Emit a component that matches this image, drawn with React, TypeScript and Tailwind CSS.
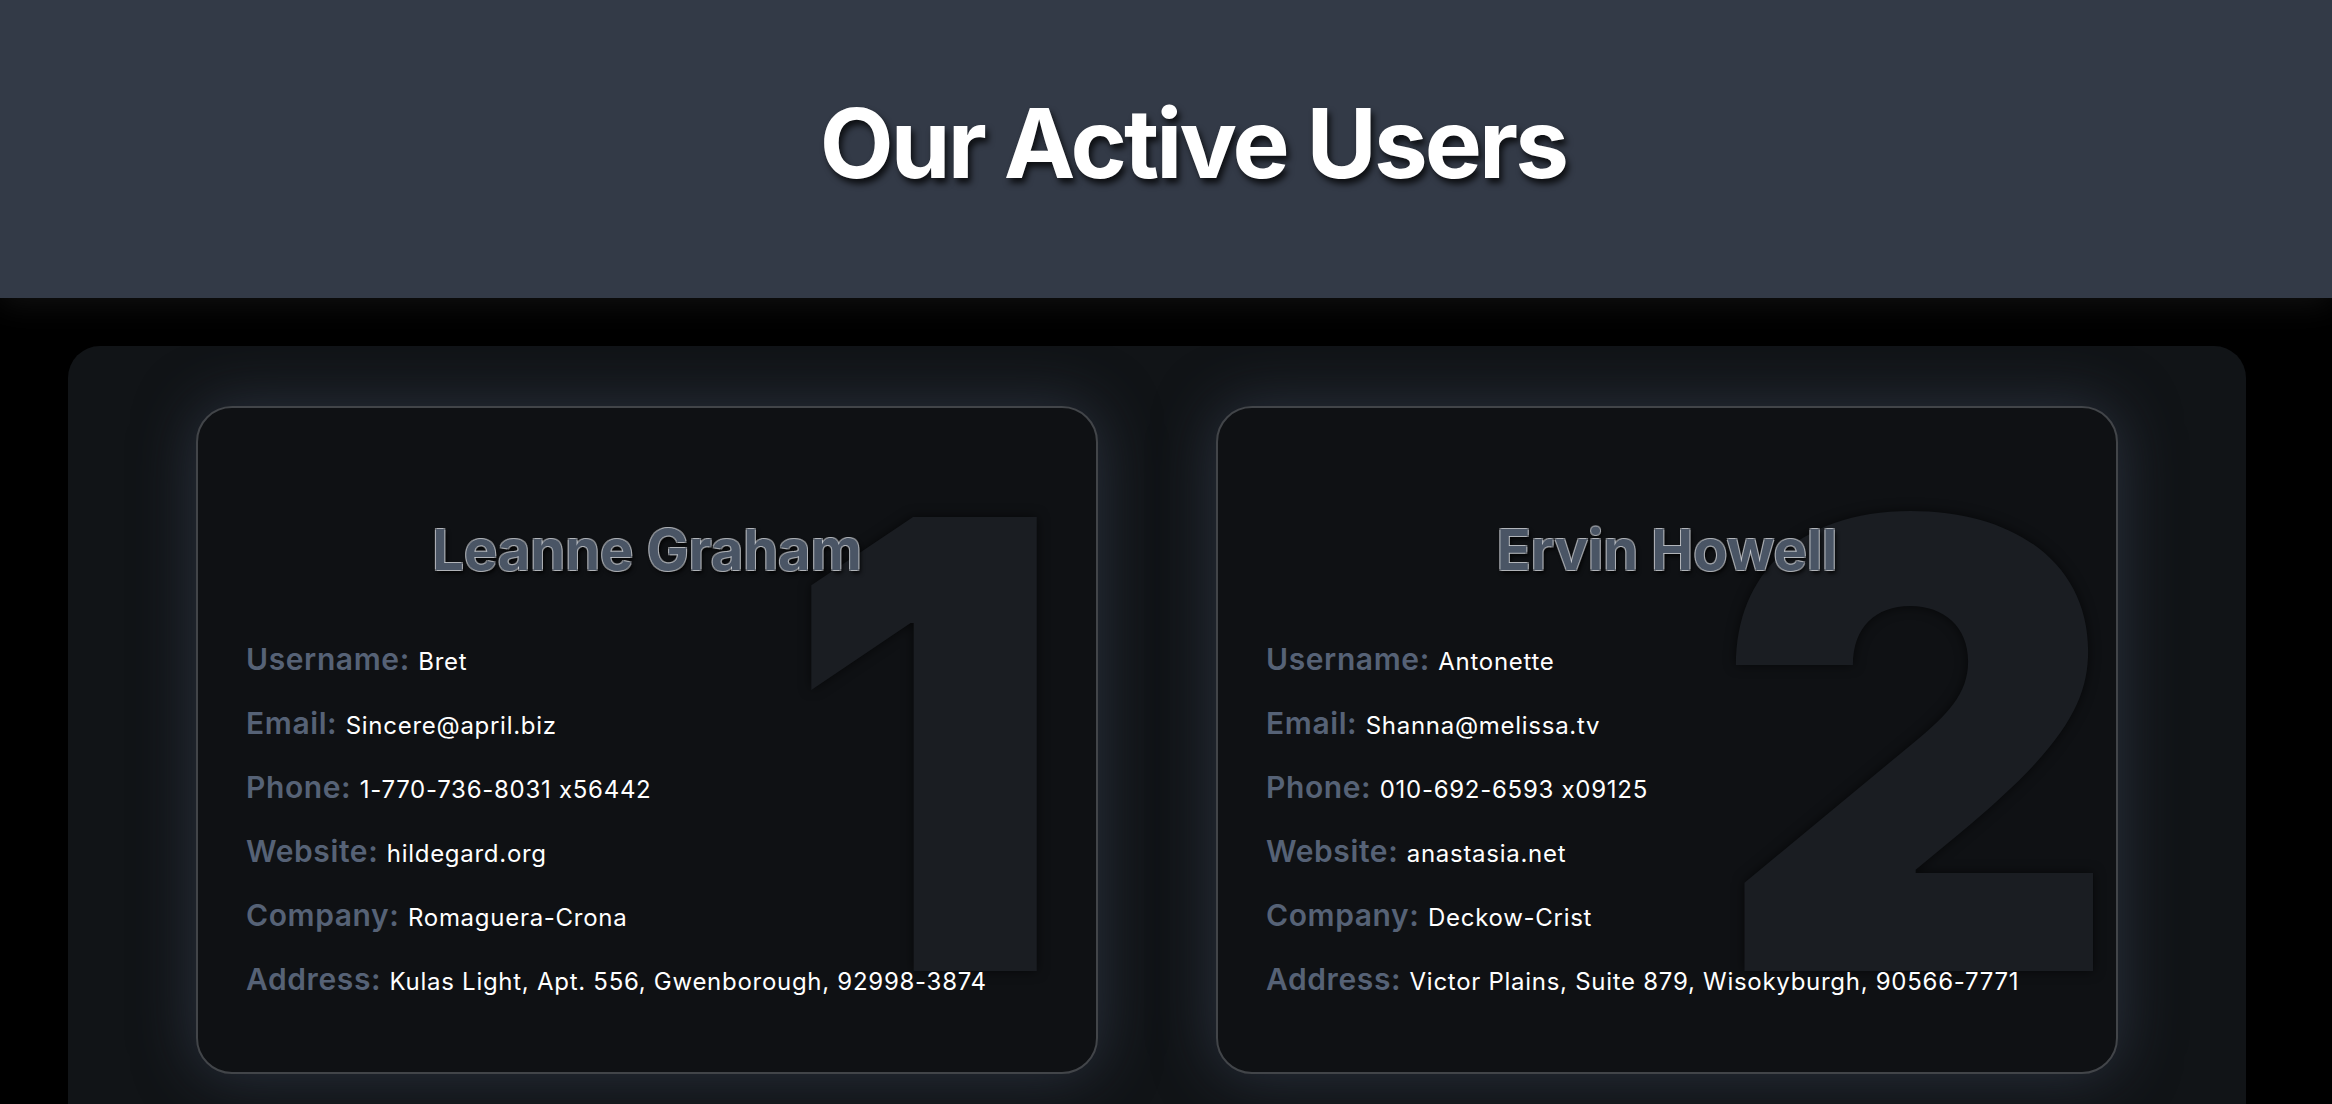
import React from 'react';

interface User {
  id: number;
  name: string;
  username: string;
  email: string;
  phone: string;
  website: string;
  company: string;
  address: string;
}

const users: User[] = [
  {
    id: 1,
    name: 'Leanne Graham',
    username: 'Bret',
    email: 'Sincere@april.biz',
    phone: '1-770-736-8031 x56442',
    website: 'hildegard.org',
    company: 'Romaguera-Crona',
    address: 'Kulas Light, Apt. 556, Gwenborough, 92998-3874',
  },
  {
    id: 2,
    name: 'Ervin Howell',
    username: 'Antonette',
    email: 'Shanna@melissa.tv',
    phone: '010-692-6593 x09125',
    website: 'anastasia.net',
    company: 'Deckow-Crist',
    address: 'Victor Plains, Suite 879, Wisokyburgh, 90566-7771',
  },
];

function UserCard({ user }: { user: User }) {
  const rows: [string, string][] = [
    ['Username', user.username],
    ['Email', user.email],
    ['Phone', user.phone],
    ['Website', user.website],
    ['Company', user.company],
    ['Address', user.address],
  ];

  // the "1" glyph sits further in than the wider digits
  const digitPos = user.id === 1 ? 'right-[30px]' : 'right-[-2px]';

  return (
    <div className="relative overflow-hidden rounded-[36px] border-2 border-[#424549] bg-[#0f1114] px-12 pt-[114px] pb-[75px] shadow-[0_0_60px_rgba(60,70,90,0.6)]">
      <span
        className={`pointer-events-none absolute top-[24px] ${digitPos} select-none text-[624px] font-black leading-none text-[#1a1d22] [text-shadow:0_0_12px_rgba(0,0,0,0.6)]`}
      >
        {user.id}
      </span>
      <h2 className="relative text-center text-[56px] font-bold leading-none text-[#4a5565] [text-shadow:-1px_-1px_0_rgba(220,224,230,0.55),1px_-1px_0_rgba(220,224,230,0.55),-1px_1px_0_rgba(220,224,230,0.55),1px_1px_0_rgba(220,224,230,0.55),2px_3px_4px_rgba(0,0,0,0.9)]">
        {user.name}
      </h2>
      <div className="relative mt-[63px] flex flex-col gap-7">
        {rows.map(([label, value]) => (
          <p key={label} className="text-3xl leading-9">
            <span className="font-semibold tracking-[0.02em] text-[#566276]">{label}:</span>{' '}
            <span className="text-2xl leading-none tracking-[0.03em] text-white">{value}</span>
          </p>
        ))}
      </div>
    </div>
  );
}

export default function App() {
  return (
    <div className="min-h-screen bg-black font-['Inter',sans-serif] [font-feature-settings:'calt'_0]">
      <header className="relative z-10 h-[298px] bg-[#333a47] pt-[95px] pl-[54px] shadow-[0_6px_30px_rgba(255,255,255,0.07)]">
        <h1 className="text-center text-8xl font-bold leading-none tracking-[-0.03em] text-white [text-shadow:3px_5px_6px_rgba(0,0,0,0.75)]">
          Our Active Users
        </h1>
      </header>
      <main className="pt-12 pb-16">
        <div className="ml-[68px] w-[2178px] rounded-[32px] bg-[#111417] px-32 pt-[60px] pb-16">
          <div className="grid grid-cols-2 gap-[118px]">
            {users.map((user) => (
              <UserCard key={user.id} user={user} />
            ))}
          </div>
        </div>
      </main>
    </div>
  );
}
